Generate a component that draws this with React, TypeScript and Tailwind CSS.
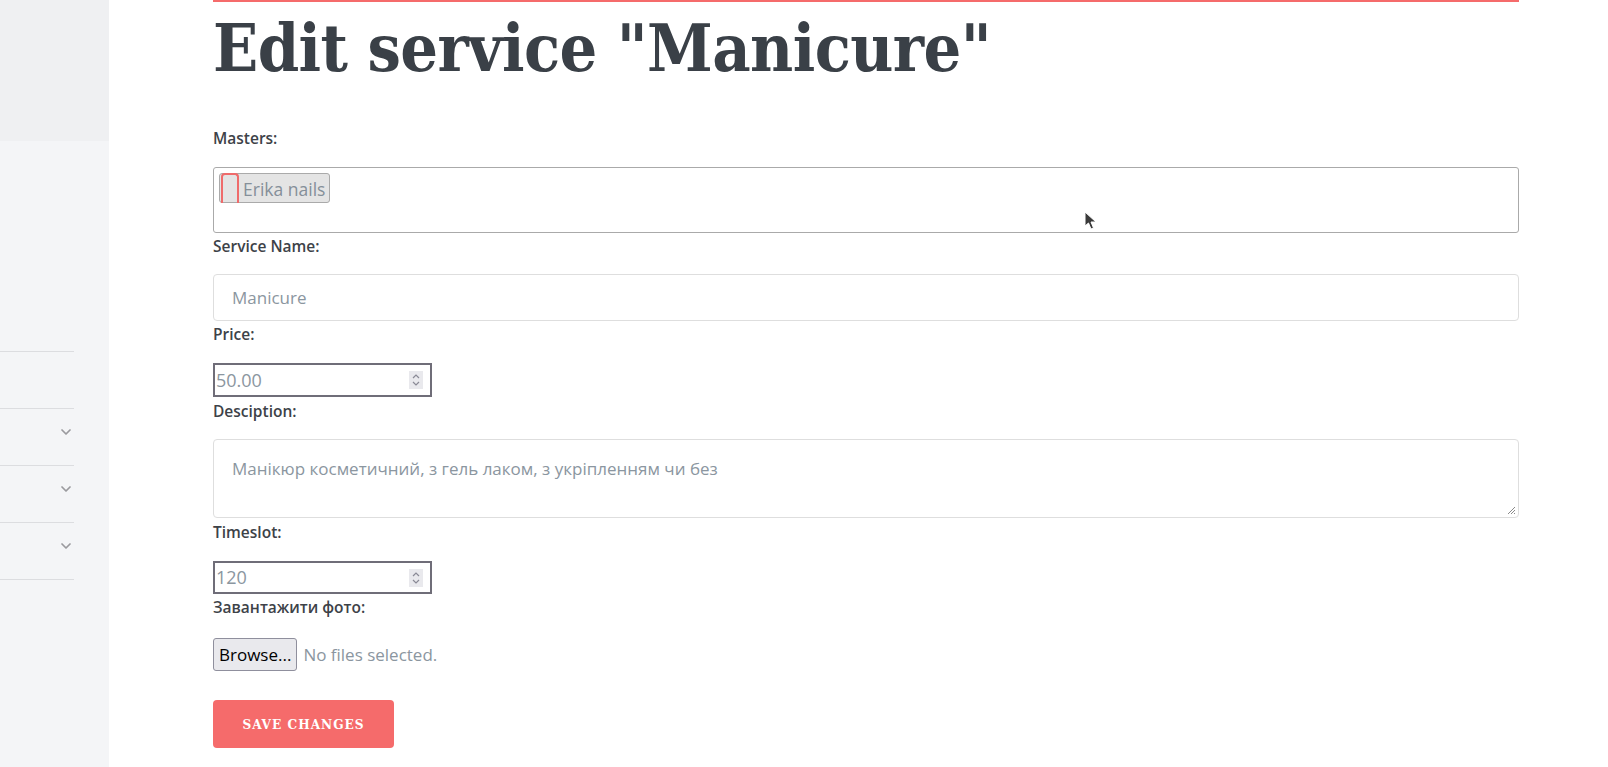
import React from 'react';
import { ChevronDown } from 'lucide-react';

const label = 'block h-[20px] text-[15.5px] leading-[20px] font-semibold text-[#3d4248]';
const sans = { fontFamily: '"Open Sans", "DejaVu Sans", sans-serif' };
const slab = { fontFamily: '"DejaVu Serif Condensed", "DejaVu Serif", serif' };

const Spinner = () => (
  <div className="flex h-[18px] w-[14px] flex-col items-center justify-center bg-[#e9e9ed]">
    <svg width="8" height="14" viewBox="0 0 8 14" fill="none" stroke="#8a8a96" strokeWidth="1.2">
      <path d="M1 5 L4 2 L7 5" />
      <path d="M1 9 L4 12 L7 9" />
    </svg>
  </div>
);

const NumberField = ({ value, className }: { value: string; className: string }) => (
  <div className={`flex w-[219px] items-center justify-between border-2 border-[#6f6d78] bg-white pl-[1px] pr-[7px] ${className}`}>
    <span className="text-[18px] text-[#8b96a0]" style={sans}>{value}</span>
    <Spinner />
  </div>
);

const SideItem = ({ chevron }: { chevron?: boolean }) => (
  <div className="flex h-[57px] items-center justify-end border-b border-[#dcdde0] pb-[10px] pr-0">
    {chevron && <ChevronDown size={16} strokeWidth={2.6} className="text-[#9a9a9e]" />}
  </div>
);

export default function App() {
  return (
    <div className="flex min-h-[767px] w-full bg-white" style={sans}>
      {/* sidebar */}
      <aside className="flex w-[109px] shrink-0 flex-col bg-[#f4f5f7]">
        <div className="h-[141px] bg-[#eff0f2]" />
        <div className="mr-[35px] mt-[210px] border-t border-[#dcdde0]">
          <SideItem />
          <SideItem chevron />
          <SideItem chevron />
          <SideItem chevron />
        </div>
      </aside>

      {/* main */}
      <main className="relative flex-1 pl-[104px] pr-[89px]">
        <div className="h-[2px] bg-[#f56b6b]" />
        <h1 className="mt-[6px] h-[120px] text-[66px] leading-[80px] font-bold tracking-[-0.6px] text-[#3a4047]" style={slab}>
          Edit service "Manicure"
        </h1>

        <form className="flex flex-col items-start">
          <label className={label}>Masters:</label>
          <div className="mt-[19px] h-[66px] w-full rounded-[3px] border border-[#aaaaaa] bg-white pl-[5px] pt-[5px]">
            <div className="flex h-[30px] w-[111px] items-center gap-[4px] rounded-[3px] border border-[#aaaaaa] bg-[#e4e4e4]">
              <span className="ml-[1px] h-[30px] w-[18px] rounded-t-[4px] border-2 border-b-0 border-[#ef6b6b]" />
              <span className="pt-[2px] text-[17.5px] text-[#858f99]">Erika nails</span>
            </div>
          </div>

          <label className={`${label} mt-[3px]`}>Service Name:</label>
          <div className="mt-[18px] flex h-[47px] w-full items-center rounded-[4px] border border-[#dedede] bg-white px-[18px] text-[17px] text-[#8b96a0]">
            Manicure
          </div>

          <label className={`${label} mt-[3px]`}>Price:</label>
          <NumberField value="50.00" className="mt-[19px] h-[34px]" />

          <label className={`${label} mt-[4px]`}>Desciption:</label>
          <div className="relative mt-[18px] h-[79px] w-full rounded-[4px] border border-[#dedede] bg-white px-[18px] pt-[17px] text-[17px] leading-[24px] text-[#8b96a0]">
            Манікюр косметичний, з гель лаком, з укріпленням чи без
            <svg className="absolute bottom-[2px] right-[2px]" width="9" height="9" viewBox="0 0 9 9" stroke="#8a8a8a" strokeWidth="1">
              <path d="M8 1 L1 8 M8 4 L4 8 M8 7 L7 8" />
            </svg>
          </div>

          <label className={`${label} mt-[4px]`}>Timeslot:</label>
          <NumberField value="120" className="mt-[19px] h-[33px]" />

          <label className={`${label} mt-[3px]`}>Завантажити фото:</label>
          <div className="mt-[21px] flex items-center gap-[6px]">
            <button type="button" className="h-[33px] rounded-[3px] border border-[#8f8f9d] bg-[#e9e9ed] px-[5px] text-[17px] text-black">
              Browse...
            </button>
            <span className="text-[17px] text-[#8b96a0]">No files selected.</span>
          </div>

          <button
            type="button"
            className="mt-[29px] h-[48px] w-[181px] rounded-[4px] bg-[#f56b6b] text-[13.5px] font-bold uppercase tracking-[1px] text-white"
            style={slab}
          >
            Save Changes
          </button>
        </form>

        {/* mouse pointer */}
        <svg className="absolute left-[975px] top-[211px]" width="14" height="20" viewBox="0 0 14 20">
          <path d="M1 1 L1 15 L4.5 12 L7 18 L9.5 17 L7 11 L12 11 Z" fill="#3a3a3a" stroke="#ffffff" strokeWidth="1" />
        </svg>
      </main>
    </div>
  );
}
